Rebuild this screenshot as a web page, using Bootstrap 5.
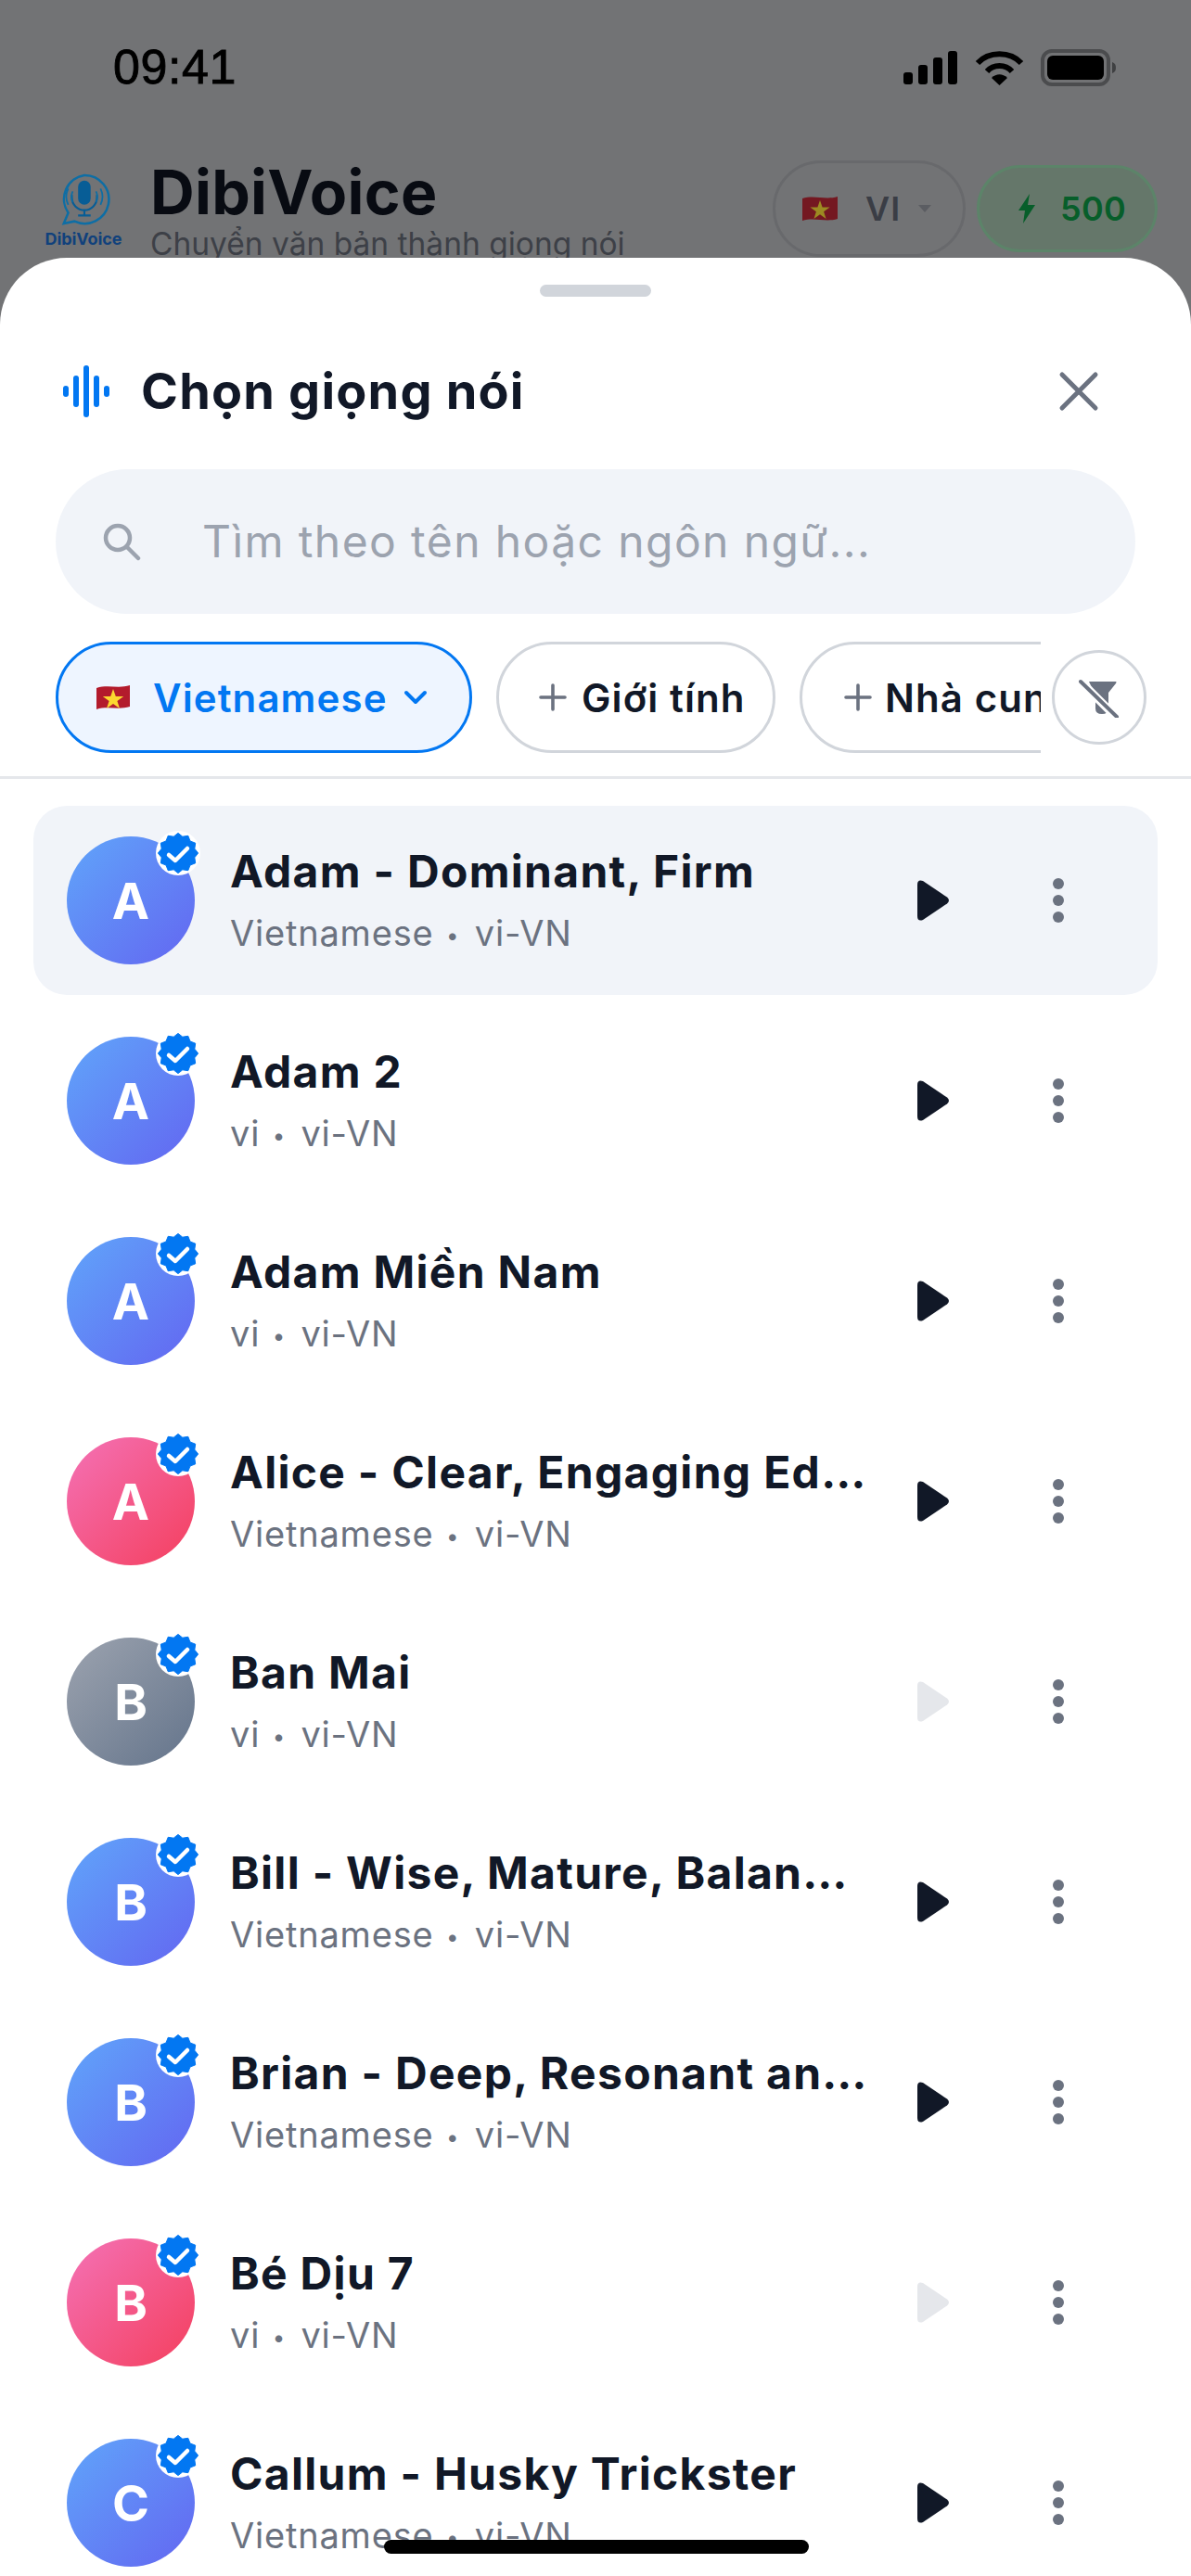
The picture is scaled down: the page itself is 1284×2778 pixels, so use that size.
<!DOCTYPE html>
<html lang="vi"><head><meta charset="utf-8">
<link href="https://cdn.jsdelivr.net/npm/bootstrap@5.3.0/dist/css/bootstrap.min.css" rel="stylesheet">
<style>
html,body{margin:0;height:2778px;overflow:hidden;background:#fff;font-family:Inter,"Noto Sans",sans-serif;color:#111827}
.screen{height:2778px;overflow:hidden;background:#fff;position:relative}
.backdrop{height:400px;background:#727375;overflow:hidden}
.statusbar{height:172px;padding:46px 80px 0 122px;color:#000}
.clock{font-family:"Liberation Sans",sans-serif;font-size:52px;line-height:52px;font-weight:400;letter-spacing:.6px;-webkit-text-stroke:.9px #000}
.status-icons{margin-top:7px}
.apphead{padding-left:46px;padding-right:36px}
.logo-box{width:88px;margin-right:28px;padding-top:15px}
.logo-name{font-size:18px;font-weight:700;color:#10417c;line-height:20px;margin-top:5px;margin-left:-6px;margin-right:-6px;letter-spacing:-.1px;white-space:nowrap}
.app-title{font-size:66px;font-weight:700;line-height:66px;color:#080b12;margin-top:2px;letter-spacing:.3px;white-space:nowrap}
.app-sub{font-size:33.5px;line-height:36px;color:#3d4047;margin-top:5px;white-space:nowrap}
.head-pills{gap:12px}
.lang-pill{width:208px;height:104px;border:3px solid #68696c;border-radius:52px;margin-top:1px;padding-left:28px}
.lang-text{font-size:36px;font-weight:600;color:#3a3d45;letter-spacing:1px;margin:0 18px 0 29px}
.credit-pill{width:195px;height:94px;border:3px solid #5c8469;border-radius:47px;background:#65776a;color:#075e2a;font-size:36px;font-weight:600;letter-spacing:.3px;margin-top:6px;padding-left:42px}
.credit-pill span{margin-left:27px}
.sheet{position:absolute;left:0;right:0;top:278px;bottom:0;background:#fff;border-radius:72px 72px 0 0;overflow:hidden}
.grabber{width:120px;height:13px;border-radius:7px;background:#d1d5db;margin:29px auto 0}
.sheet-head{margin-top:60px;padding:0 99px 0 68px;height:84px}
.sheet-title{font-size:54px;line-height:64px;font-weight:700;color:#111827;margin-left:34px;letter-spacing:1.2px}
.close-x{width:44px;height:44px}
.searchbox{margin:42px 60px 0;height:156px;border-radius:78px;background:#f1f4f9;padding-left:50px;color:#9ca3af;font-size:48px;letter-spacing:1.4px}
.search-text{margin-left:66px;white-space:nowrap}
.filter-row{margin-top:30px;padding-left:60px;height:120px;position:relative}
.filter-scroll{width:1062px;overflow:hidden;gap:26px;height:120px;flex:none}
.chip{flex:none;height:120px;border-radius:60px;border:3px solid #d1d5db;background:#fff;font-size:42px;font-weight:600;color:#111827;letter-spacing:1.1px;white-space:nowrap}
.chip-on{width:449px;border-color:#0277f2;background:#eef5ff;color:#0277f2;padding-left:40px}
.chip-gender{width:301px;padding-left:43px}
.chip-vendor{width:400px;padding-left:45px}
.plus-gap{margin-right:16px}
.chip-vendor .plus-gap{margin-right:14px}
.chevron-gap{margin-left:17px}
.clear-btn{width:102px;height:102px;border-radius:50%;border:3px solid #d1d5db;background:#fff;margin-left:12px;margin-top:9px}
.divider{height:3px;background:#e5e7eb;margin-top:25px}
.voices{padding:29px 36px 0}
.voice{height:204px;margin-bottom:12px;border-radius:36px;padding:0 0 0 36px;gap:38px}
.voice-on{background:#f1f4f9}
.avatar{width:138px;height:138px;border-radius:50%;flex:none;position:relative;color:#fff;font-size:54px;font-weight:700}
.av-blue{background:linear-gradient(135deg,#60a5fa,#6366f1)}
.av-pink{background:linear-gradient(135deg,#f472b6,#f43f5e)}
.av-grey{background:linear-gradient(135deg,#9ca3af,#64748b)}
.verified{position:absolute;right:-6px;top:-6px;width:48px;height:48px;border-radius:50%;background:#fff}
.verified svg{display:block}
.voice-info{width:690px;flex:none;min-width:0}
.voice-name{font-size:48px;line-height:58px;font-weight:700;color:#111827;letter-spacing:1.3px;white-space:nowrap;overflow:hidden;text-overflow:ellipsis}
.voice-meta{font-size:38px;line-height:46px;color:#6b7280;margin-top:14px;letter-spacing:.8px}
.meta-dot{font-size:24px;vertical-align:3px;margin:0 5px 0 2px}
.voice-actions{flex:none}
.play-slot{width:35px;margin-left:13px;line-height:0}
.more-slot{margin-left:111px;width:12px;line-height:0}
.home-bar{position:absolute;left:414px;bottom:24px;width:458px;height:15px;border-radius:8px;background:#000}
</style></head><body>
<div class="screen">
<div class="backdrop">
 <div class="statusbar d-flex justify-content-between align-items-start">
  <div class="clock">09:41</div>
  <svg class="status-icons" width="230" height="40" viewBox="0 0 230 40"><g fill="#000"><rect x="0" y="25" width="10" height="13" rx="3"/><rect x="16" y="17" width="10" height="21" rx="3"/><rect x="32" y="9" width="10" height="29" rx="3"/><rect x="48" y="2" width="10" height="36" rx="3"/></g><g fill="none" stroke="#000" stroke-width="6"><path d="M80 15C92 2 115 2 127 15"/><path d="M90 24C97 16 110 16 117 24"/></g><path d="M95 31C100 26 107 26 112 31L103.500 39Z" fill="#000"/><rect x="150" y="2" width="71" height="36" rx="10" fill="none" stroke="#4b4c4e" stroke-width="4"/><rect x="155" y="7" width="61" height="26" rx="6" fill="#000"/><path d="M225 14C228 15 229 17 229 20C229 23 228 25 225 26Z" fill="#3f4042"/></svg>
 </div>
 <div class="apphead d-flex">
  <div class="logo-box text-center flex-shrink-0">
   <svg width="58" height="56" viewBox="0 0 60 58" class="d-block mx-auto"><path d="M31 2a27 27 0 1 1-11 51.500L8 56l5-12A27 27 0 0 1 31 2Z" fill="none" stroke="#0e6ea5" stroke-width="2.600"/><rect x="24" y="8" width="14" height="27" rx="7" fill="#075d96"/><path d="M17 24v3a14 14 0 0 0 28 0v-3M31 41v6M24 47h14" fill="none" stroke="#075d96" stroke-width="2.200"/><path d="M13 17c-3 6-3 12 0 18M49 17c3 6 3 12 0 18M18 20c-2 4-2 8 0 12M44 20c2 4 2 8 0 12" fill="none" stroke="#0e6ea5" stroke-width="1.800"/></svg>
   <div class="logo-name">DibiVoice</div>
  </div>
  <div class="flex-grow-1">
   <div class="app-title">DibiVoice</div>
   <div class="app-sub">Chuyển văn bản thành giọng nói</div>
  </div>
  <div class="head-pills d-flex align-items-start flex-shrink-0">
   <div class="lang-pill d-flex align-items-center">
    <svg width="40" height="30" viewBox="0 0 40 30"><path d="M1 4C14 0 26 6 39 2V26C26 30 14 24 1 28Z" fill="#741821"/><path d="M20 6l2.600 7.600h8l-6.500 4.700 2.500 7.700-6.600-4.800-6.600 4.800 2.500-7.700-6.500-4.700h8Z" fill="#9c8a22"/></svg>
    <span class="lang-text">VI</span>
    <svg width="16" height="10" viewBox="0 0 16 10"><path d="M1 1H15L8 9Z" fill="#5b5d62"/></svg>
   </div>
   <div class="credit-pill d-flex align-items-center">
    <svg width="18" height="32" viewBox="0 0 18 32"><path d="M12 0L0 18H7L5 32L18 12H10Z" fill="#075e2a"/></svg>
    <span>500</span>
   </div>
  </div>
 </div>
</div>
<div class="sheet">
 <div class="grabber"></div>
 <div class="sheet-head d-flex align-items-center">
  <svg width="50" height="56" viewBox="0 0 50 56" class="flex-shrink-0"><g fill="#0277f2"><rect x="0" y="22" width="6" height="12" rx="3"/><rect x="11" y="11" width="6" height="34" rx="3"/><rect x="22" y="0" width="6" height="56" rx="3"/><rect x="33" y="11" width="6" height="34" rx="3"/><rect x="44" y="22" width="6" height="12" rx="3"/></g></svg>
  <div class="sheet-title flex-grow-1">Chọn giọng nói</div>
  <svg class="close-x" viewBox="0 0 44 44"><path d="M4 4L40 40M40 4L4 40" stroke="#6b7280" stroke-width="5" stroke-linecap="round"/></svg>
 </div>
 <div class="searchbox d-flex align-items-center">
  <svg width="42" height="42" viewBox="0 0 42 42" class="flex-shrink-0"><circle cx="17" cy="17" r="13" fill="none" stroke="#9ca3af" stroke-width="4.500"/><path d="M27 27L39 39" stroke="#9ca3af" stroke-width="4.500" stroke-linecap="round"/></svg>
  <span class="search-text">Tìm theo tên hoặc ngôn ngữ...</span>
 </div>
 <div class="filter-row d-flex align-items-start">
  <div class="filter-scroll d-flex">
   <div class="chip chip-on d-flex align-items-center">
    <svg width="38" height="28" viewBox="0 0 38 28" class="me-4"><path d="M1 4C13 0 25 5 37 1V24C25 28 13 23 1 27Z" fill="#b31b2c"/><path d="M19 5l2.800 8h8.400l-6.800 5 2.600 8-7-5-7 5 2.600-8-6.800-5h8.400Z" fill="#fcd92f"/></svg>
    <span>Vietnamese</span>
    <svg width="26" height="16" viewBox="0 0 26 16" class="chevron-gap"><path d="M3 3L13 13L23 3" fill="none" stroke="#0277f2" stroke-width="4" stroke-linecap="round" stroke-linejoin="round"/></svg>
   </div>
   <div class="chip chip-gender d-flex align-items-center">
    <svg width="30" height="30" viewBox="0 0 30 30" class="plus-gap"><path d="M15 2V28M2 15H28" stroke="#6b7280" stroke-width="3.600" stroke-linecap="round"/></svg>
    <span>Giới tính</span>
   </div>
   <div class="chip chip-vendor d-flex align-items-center">
    <svg width="30" height="30" viewBox="0 0 30 30" class="plus-gap"><path d="M15 2V28M2 15H28" stroke="#6b7280" stroke-width="3.600" stroke-linecap="round"/></svg>
    <span>Nhà cung cấp</span>
   </div>
  </div>
  <div class="clear-btn d-flex align-items-center justify-content-center">
   <svg width="44" height="44" viewBox="0 0 44 44"><path d="M11 5H40Q41 5 40 7L32 17V34Q32 40 25 40Q18 40 18 34V20Z" fill="#6b7280"/><path d="M2 5L41 44" stroke="#fff" stroke-width="9"/><path d="M2 5L41 43" stroke="#6b7280" stroke-width="4" stroke-linecap="round"/></svg>
  </div>
 </div>
 <div class="divider"></div>
 <div class="voices" id="voices"></div>
</div>
<div class="home-bar"></div>
</div>
<script>
const data=[
["Adam - Dominant, Firm","Vietnamese","A","blue",1,1],
["Adam 2","vi","A","blue",1,0],
["Adam Miền Nam","vi","A","blue",1,0],
["Alice - Clear, Engaging Educator","Vietnamese","A","pink",1,0],
["Ban Mai","vi","B","grey",0,0],
["Bill - Wise, Mature, Balanced","Vietnamese","B","blue",1,0],
["Brian - Deep, Resonant and Comforting","Vietnamese","B","blue",1,0],
["Bé Dịu 7","vi","B","pink",0,0],
["Callum - Husky Trickster","Vietnamese","C","blue",1,0]];
let pts=[];
for(let i=0;i<24;i++){const r=i%2?18.4:21.6,a=i*Math.PI/12-Math.PI/2;pts.push((22+r*Math.cos(a)).toFixed(1)+','+(22+r*Math.sin(a)).toFixed(1));}
const badge=`<svg width="44" height="44" viewBox="0 0 44 44"><polygon points="${pts.join(' ')}" fill="#0277f2" stroke="#0277f2" stroke-width="1" stroke-linejoin="round"/><path d="M12 24l7 6L32 17" fill="none" stroke="#fff" stroke-width="4.500" stroke-linecap="round" stroke-linejoin="round"/></svg>`;
document.getElementById('voices').innerHTML=data.map(d=>`<div class="voice d-flex align-items-center ${d[5]?'voice-on':''}">
<div class="avatar av-${d[3]} d-flex align-items-center justify-content-center">${d[2]}<span class="verified d-flex align-items-center justify-content-center">${badge}</span></div>
<div class="voice-info"><div class="voice-name">${d[0]}</div><div class="voice-meta">${d[1]} <span class="meta-dot">•</span> vi-VN</div></div>
<div class="voice-actions d-flex align-items-center">
<div class="play-slot"><svg width="35" height="44" viewBox="0 0 35 44"><path d="M0 5Q0 -1 6 1L32 18.500Q36 22 32 25.500L6 43Q0 45 0 39Z" fill="${d[4]?'#111827':'#e5e7eb'}"/></svg></div>
<div class="more-slot"><svg width="12" height="48" viewBox="0 0 12 48"><circle cx="6" cy="6" r="6" fill="#6b7280"/><circle cx="6" cy="24" r="6" fill="#6b7280"/><circle cx="6" cy="42" r="6" fill="#6b7280"/></svg></div>
</div></div>`).join('');
</script>
</body></html>
